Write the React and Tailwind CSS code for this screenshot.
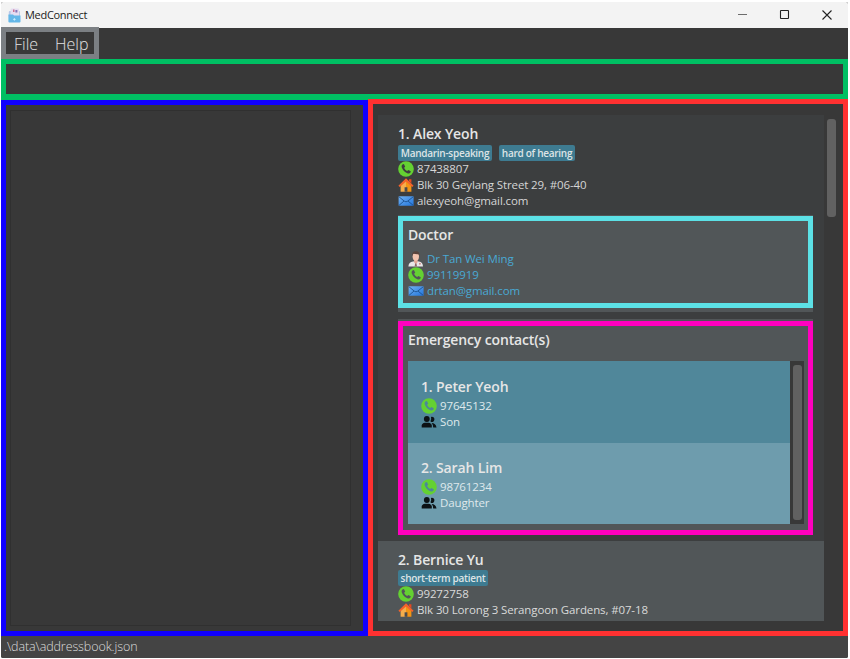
import React from "react";

function PhoneIcon() {
  return (
    <svg className="h-4 w-4 shrink-0" viewBox="0 0 16 16">
      <circle cx="8" cy="8" r="7.8" fill="#64d132" />
      <path
        d="M4.5 3.6 L5.9 3.1 L7.2 5.7 L6.1 6.8 C6.7 8.2 7.8 9.4 9.2 10 L10.3 8.9 L12.8 10.3 L12.3 11.8 C11.7 12.6 10.5 12.8 9.3 12.3 C6.7 11.2 4.7 9.1 3.8 6.6 C3.4 5.3 3.7 4.2 4.5 3.6 Z"
        className="fill-current"
      />
    </svg>
  );
}

function HomeIcon() {
  return (
    <svg className="h-4 w-4 shrink-0" viewBox="0 0 16 16">
      <path d="M2.6 8 L8 3 V14.8 H2.6 Z" fill="#f5ad4c" />
      <path d="M8 3 L13.4 8 V14.8 H8 Z" fill="#f39313" />
      <path d="M6.6 10.3 H9.4 V14.8 H6.6 Z" fill="#4b4b4c" />
      <path d="M11 2.2 H13.4 V6.4 L11 4 Z" fill="#e8481f" />
      <path d="M0.4 8.8 L8 1.2 L15.6 8.8 L14.2 10 L8 4.4 L1.8 10 Z" fill="#f2622b" />
    </svg>
  );
}

function MailIcon() {
  return (
    <svg className="h-4 w-4 shrink-0" viewBox="0 0 16 16">
      <defs>
        <linearGradient id="mail" x1="0" y1="0" x2="1" y2="1">
          <stop offset="0" stopColor="#72b3f3" />
          <stop offset="1" stopColor="#2174dc" />
        </linearGradient>
      </defs>
      <rect x="0.6" y="3.2" width="15" height="9.6" rx="0.6" fill="url(#mail)" />
      <path d="M1 3.8 L6.4 8.2 Q8 9.4 9.6 8.2 L15.2 3.8 M1 12.4 L6 8 M15.2 12.4 L10 8" fill="none" stroke="#174a86" strokeWidth="0.8" />
    </svg>
  );
}

function DoctorIcon() {
  return (
    <svg className="h-4 w-4 shrink-0" viewBox="0 0 16 16">
      <path d="M0.4 15.4 Q0.6 11.4 5 10.6 L8 10 L11 10.6 Q14.8 11.4 15 15.4 Z" fill="#e9e7e8" />
      <path d="M6 8.6 H9.6 V11 L7.8 13.6 L6 11 Z" fill="#e3a795" />
      <path d="M7.1 12.6 H8.5 L9 15.4 H6.6 Z" fill="#8e6a67" />
      <ellipse cx="7.8" cy="5.6" rx="3.2" ry="4.2" fill="#f3c3ae" />
      <path d="M4.1 5 Q3.6 0.2 8 0.2 Q12 0.2 11.4 5 L10.6 3.2 Q7.8 3.4 5.4 2.8 Z" fill="#59443d" />
      <path d="M11 12.8 h1.8 M11.9 11.9 v1.8" stroke="#c96b68" strokeWidth="0.7" />
    </svg>
  );
}

function PeopleIcon() {
  return (
    <svg className="h-4 w-4 shrink-0" viewBox="0 0 16 16" fill="#0c1215">
      <circle cx="5.8" cy="5" r="2.9" />
      <path d="M0.7 13.6 V11.6 Q0.9 9.2 4 8.8 H7.4 Q10.6 9.2 10.8 11.6 V13.6 Z" />
      <path d="M10 2.9 Q13.4 2.4 13.4 5.4 Q13.2 7.9 10.4 8 Q9.8 7.6 9.5 7.2 Q10.6 5 10 2.9 Z" />
      <path d="M10.6 9 Q14.8 9 15.5 13.6 H12.2 Q12.3 10.6 10.6 9 Z" />
    </svg>
  );
}

function AppIcon() {
  return (
    <svg className="h-[15px] w-[13px]" viewBox="0 0 13 15">
      <rect x="0.8" y="3" width="11.2" height="6" rx="1" fill="#b7c7e8" />
      <rect x="2.6" y="0.6" width="8.4" height="8" rx="1" fill="#e5ddf1" />
      <path d="M5 1.5 H6.5 V4 H5 Z" fill="#c97192" />
      <path d="M7.4 2 H9.4 V4.6 H7.4 Z" fill="#8574b8" />
      <path d="M0.4 6.4 H5 L6 7.6 H12.5 V13.6 Q12.5 14.5 11.6 14.5 H1.4 Q0.4 14.5 0.4 13.6 Z" fill="#64b7e8" />
      <path d="M5.2 11.4 H7.6 M6.4 10.2 V12.6" stroke="#c9edff" strokeWidth="1" />
    </svg>
  );
}

function Line({ icon, children }) {
  return (
    <div className="flex h-4 items-center gap-[3px] text-[11.5px] leading-4 tracking-[-0.12px] whitespace-nowrap">
      {icon}
      <span>{children}</span>
    </div>
  );
}

function Name({ children }) {
  return <div className="text-[14px] leading-5 font-semibold tracking-[-0.14px] whitespace-nowrap text-[#e6e6e6]">{children}</div>;
}

function Tag({ children, className = "" }) {
  return (
    <span className={`flex h-4 items-center justify-center rounded-[2px] bg-[#3e7b91] text-[10px] leading-4 font-semibold tracking-[-0.28px] whitespace-nowrap text-[#dde4e6] ${className}`}>
      {children}
    </span>
  );
}

function Contact({ name, phone, relation, className }) {
  return (
    <div className={`pl-[13px] ${className}`}>
      <Name>{name}</Name>
      <div className="mt-px text-[#dfe9ec]">
        <Line icon={<span className="text-[#4d8799]"><PhoneIcon /></span>}>{phone}</Line>
        <Line icon={<PeopleIcon />}>{relation}</Line>
      </div>
    </div>
  );
}

export default function App() {
  return (
    <div className="h-[659px] w-[850px] overflow-hidden bg-white pt-[2px] pr-[2px] pl-[1px] font-['Open_Sans','Noto_Sans',sans-serif]">
      <div className="flex h-[656px] flex-col overflow-hidden rounded-[2px] bg-[#383838]">
        <header className="flex h-[26px] shrink-0 items-center bg-[#f3f3f3] pr-px pl-[7px] text-[#1b1b1b]">
          <AppIcon />
          <span className="ml-[4px] text-[11px] tracking-[-0.3px]">MedConnect</span>
          <svg className="ml-auto h-[12px] w-[112px]" viewBox="0 0 112 12" fill="none">
            <path d="M3 5.5 H12" stroke="#6c6c6c" />
            <rect x="45.5" y="1.5" width="8" height="8" rx="0.5" stroke="#222" strokeWidth="1.1" />
            <path d="M87.5 1.5 L96.5 10.5 M96.5 1.5 L87.5 10.5" stroke="#222" strokeWidth="1.1" />
          </svg>
        </header>

        <div className="h-[31px] shrink-0">
          <nav className="-mt-px flex h-[32px] w-[98px] items-center border-[5px] border-[#7b7f83] pt-px pl-[8px] text-[16px] font-light text-[#e2e2e2]">
            <span className="w-[41px]">File</span>
            <span>Help</span>
          </nav>
        </div>

        <div className="h-[40px] shrink-0 border-[5px] border-[#00bf63]" />

        <div className="flex h-[537px] shrink-0">
          <section className="w-[367px] border-t border-[#00bf63]">
            <div className="h-full border-[5px] border-[#1000ff] py-[5px] pr-[12px] pl-[4px]">
              <div className="h-full border border-[#303030]" />
            </div>
          </section>

          <section className="flex w-[480px] border-[5px] border-[#ff3131] pt-[11px] pl-[5px]">
            <div className="h-[506px] w-[446px] overflow-hidden">
              <article className="h-[426px] bg-[#3c3e3f] pt-[9px] pr-[11px] pl-[20px]">
                <Name>1. Alex Yeoh</Name>
                <div className="mt-px flex gap-[7px]">
                  <Tag className="w-[94px]">Mandarin-speaking</Tag>
                  <Tag className="w-[76px]">hard of hearing</Tag>
                </div>
                <div className="text-[#d5d5d5]">
                  <Line icon={<span className="text-[#3c3e3f]"><PhoneIcon /></span>}>87438807</Line>
                  <Line icon={<HomeIcon />}>Blk 30 Geylang Street 29, #06-40</Line>
                  <Line icon={<MailIcon />}>alexyeoh@gmail.com</Line>
                </div>

                <div className="mt-[6px] h-[97px] bg-[#515658] pt-px">
                  <div className="h-[92px] border-[5px] border-[#5ce1e6] pt-[4px] pl-[5px]">
                    <Name>Doctor</Name>
                    <div className="mt-[6px] text-[#49a9d4]">
                      <Line icon={<DoctorIcon />}>Dr Tan Wei Ming</Line>
                      <Line icon={<span className="text-[#515658]"><PhoneIcon /></span>}>99119919</Line>
                      <Line icon={<MailIcon />}>drtan@gmail.com</Line>
                    </div>
                  </div>
                </div>

                <div className="mt-[7px] h-[216px] bg-[#515658] pt-[2px]">
                  <div className="h-[214px] border-[5px] border-[#ff00bf] pt-[4px] pl-[5px]">
                    <Name>Emergency contact(s)</Name>
                    <div className="mt-[11px] flex h-[163px] w-[396px]">
                      <div className="w-[382px]">
                        <Contact name="1. Peter Yeoh" phone="97645132" relation="Son" className="h-[82px] bg-[#50879a] pt-[16px]" />
                        <Contact name="2. Sarah Lim" phone="98761234" relation="Daughter" className="h-[81px] bg-[#6e9cad] pt-[15px]" />
                      </div>
                      <div className="w-[14px] bg-[#383838] pt-[4px] pl-[3px]">
                        <div className="h-[155px] w-[9px] rounded-[3px] bg-[#616161]" />
                      </div>
                    </div>
                  </div>
                </div>
              </article>

              <article className="h-[80px] bg-[#515658] pt-[9px] pl-[20px]">
                <Name>2. Bernice Yu</Name>
                <div className="flex">
                  <Tag className="w-[90px]">short-term patient</Tag>
                </div>
                <div className="text-[#dadada]">
                  <Line icon={<span className="text-[#515658]"><PhoneIcon /></span>}>99272758</Line>
                  <Line icon={<HomeIcon />}>Blk 30 Lorong 3 Serangoon Gardens, #07-18</Line>
                </div>
              </article>
            </div>
            <div className="mt-[4px] ml-[3px] h-[98px] w-[9px] rounded-[3px] bg-[#616161]" />
          </section>
        </div>

        <footer className="h-[22px] shrink-0 bg-[#444444] pl-[3px] text-[12.5px] leading-[21px] font-light tracking-[-0.1px] text-[#dedede]">
          .\data\addressbook.json
        </footer>
      </div>
    </div>
  );
}
